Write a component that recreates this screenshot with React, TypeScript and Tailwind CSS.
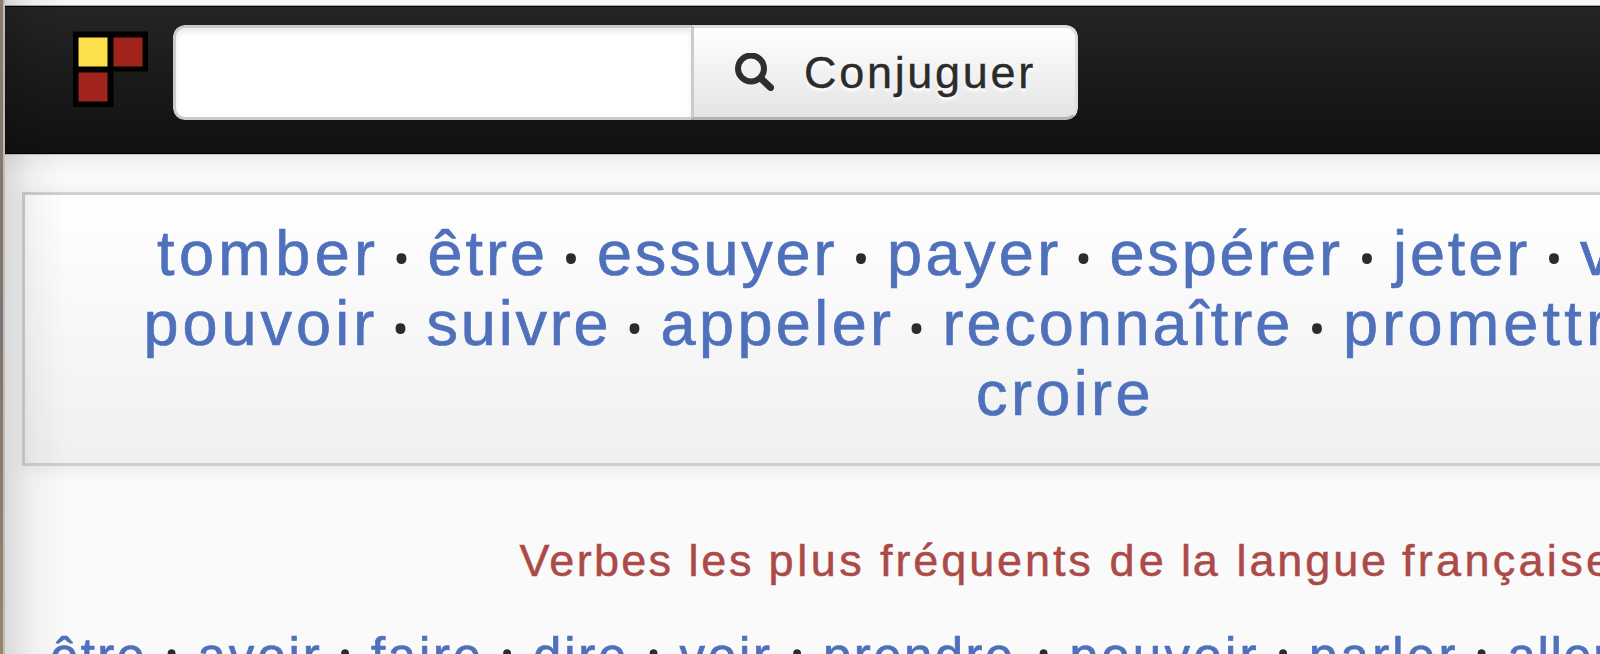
import clsx from "clsx";

type Word = { text: string; className: string };

const recent: Word[][] = [
    [
        { text: "tomber", className: "w-[270.5px] tracking-[4.4px]" },
        { text: "être", className: "w-[169.5px] tracking-[3px]" },
        { text: "essuyer", className: "w-[290px] tracking-[2.8px]" },
        { text: "payer", className: "w-[222.5px] tracking-[3.4px]" },
        { text: "espérer", className: "w-[283.5px] tracking-[2.8px]" },
        { text: "jeter", className: "w-[187px] tracking-[2.9px]" },
        { text: "vendre", className: "w-[260px] tracking-[3px]" },
    ],
    [
        { text: "pouvoir", className: "w-[283px] tracking-[4px]" },
        { text: "suivre", className: "w-[234px] tracking-[2.8px]" },
        { text: "appeler", className: "w-[282px] tracking-[3.4px]" },
        { text: "reconnaître", className: "w-[400.5px] tracking-[2.9px]" },
        { text: "promettre", className: "w-[380px] tracking-[4.2px]" },
    ],
];

const frequent: Word[] = [
    { text: "être", className: "w-[147.5px] tracking-[2.3px]" },
    { text: "avoir", className: "w-[173.5px] tracking-[2.9px]" },
    { text: "faire", className: "w-[162px] tracking-[2.7px]" },
    { text: "dire", className: "w-[146.5px] tracking-[2.8px]" },
    { text: "voir", className: "w-[143.5px] tracking-[2.8px]" },
    { text: "prendre", className: "w-[246.5px] tracking-[2.4px]" },
    { text: "pouvoir", className: "w-[239.5px] tracking-[3.3px]" },
    { text: "parler", className: "w-[198.5px] tracking-[3.2px]" },
    { text: "aller", className: "w-[160px] tracking-[1.6px]" },
];

const title: Word[] = [
    { text: "Verbes", className: "w-[169px] tracking-[2.3px]" },
    { text: "les", className: "w-[80px] tracking-[2.8px]" },
    { text: "plus", className: "w-[111.5px] tracking-[3.6px]" },
    { text: "fréquents", className: "w-[229.5px] tracking-[2.9px]" },
    { text: "de", className: "w-[71.5px] tracking-[4.2px]" },
    { text: "la", className: "w-[55.5px] tracking-[1.8px]" },
    { text: "langue", className: "w-[165.5px] tracking-[2.9px]" },
    { text: "française", className: "w-[230px] tracking-[3.3px]" },
];

function Verb({ word, small }: { word: Word; small?: boolean }) {
    return (
        <span className={clsx("flex shrink-0 justify-between", word.className)}>
            <a className="text-[#4f70bb] [-webkit-text-stroke:0.7px_#4f70bb]">{word.text}</a>
            <span
                className={clsx(
                    "mr-[21px] flex w-[10px] justify-center font-['Noto_Sans'] tracking-normal text-[#2b2b2b]",
                    small ? "mt-[5px] h-[37px] text-[64px] leading-[37px]" : "mt-[18px] h-[40px] text-[80px] leading-[40px]"
                )}
            >
                ·
            </span>
        </span>
    );
}

function Logo() {
    return (
        <svg className="h-[76px] w-[76px] shrink-0" viewBox="0 0 76 76">
            <path d="M0 0.5H75V40.5H40.5V76H0Z" fill="#000" />
            <rect x="5.5" y="6.5" width="29" height="29" fill="#fbe04b" />
            <rect x="40.5" y="6.5" width="29" height="29" fill="#a0241b" />
            <rect x="5.5" y="41.5" width="29" height="29" fill="#a0241b" />
        </svg>
    );
}

function Header() {
    return (
        <header className="flex h-[148px] items-start border-y border-[#000] bg-linear-to-b from-[#242424] to-[#111] pl-[68px]">
            <div className="mt-[24px]">
                <Logo />
            </div>
            <div className="mt-[18px] ml-[24px] flex h-[95px] w-[905px] overflow-hidden rounded-[12px]">
                <input className="w-[518px] rounded-l-[12px] border-[3px] border-r-0 border-[#cbcbcb] bg-white shadow-[inset_0_4px_5px_#ececec] outline-none" />
                <button className="flex flex-1 items-center rounded-r-[12px] border-[3px] border-[#dedede] border-b-[#b4b4b4] border-l-[#cbcbcb] bg-linear-to-b from-white to-[#e4e4e4] pl-[41px]">
                    <svg className="h-[40px] w-[40px] blur-[0.7px]" viewBox="0 0 40 40" fill="none" stroke="#2e2e2e">
                        <circle cx="16" cy="15.5" r="13" strokeWidth="6" />
                        <path d="M26 25.5L35.5 34.5" strokeWidth="7" strokeLinecap="round" />
                    </svg>
                    <span className="ml-[29px] text-[45px] leading-none tracking-[2.7px] text-[#2b2b2b] [-webkit-text-stroke:0.4px_#2b2b2b] [text-shadow:0_3px_3px_#fff]">
                        Conjuguer
                    </span>
                </button>
            </div>
        </header>
    );
}

export default function App() {
    return (
        <div className="flex h-[654px] w-[1600px] overflow-hidden bg-[#fafafa] font-['Liberation_Sans',sans-serif] whitespace-nowrap">
            <div className="w-[3px] shrink-0 bg-linear-to-b from-[#8a7d6d] via-[#7d7470] to-[#9a8369]" />
            <div className="w-[2px] shrink-0 bg-[#bdbcbb]" />
            <main className="relative w-[1595px] overflow-hidden">
                <div className="h-[6px] border-b border-[#a9acac] bg-[#f6f6f6]" />
                <Header />
                <div className="h-[38px] border-t border-[#c4c4c4] bg-linear-to-b from-[#efefef] to-[#fafafa] to-50%" />
                <section className="ml-[17px] h-[274px] w-[2000px] border-[3px] border-[#d0d0d0] bg-linear-to-b from-white to-[#f0f0f0] pt-[23px] text-[63px] leading-[70px] shadow-[0_3px_14px_#e8e8e8]">
                    <div className="flex h-[70px] pl-[132px]">
                        {recent[0].map((w) => <Verb key={w.text} word={w} />)}
                    </div>
                    <div className="flex h-[70px] pl-[118.5px]">
                        {recent[1].map((w) => <Verb key={w.text} word={w} />)}
                    </div>
                    <a className="ml-[951px] tracking-[3.4px] text-[#4f70bb] [-webkit-text-stroke:0.7px_#4f70bb]">croire</a>
                </section>
                <h2 className="mt-[70px] flex h-[50px] pl-[514.5px] text-[45px] leading-[50px] text-[#ab4a46] [-webkit-text-stroke:0.5px_#ab4a46]">
                    {title.map((w) => (
                        <span key={w.text} className={clsx("shrink-0", w.className)}>{w.text}</span>
                    ))}
                </h2>
                <div className="mt-[42px] flex h-[57px] pl-[45px] text-[51px] leading-[57px]">
                    {frequent.map((w) => <Verb key={w.text} word={w} small />)}
                </div>
                {/* page edge shade */}
                <div className="pointer-events-none absolute inset-y-0 left-0 w-[62px] bg-linear-to-r from-black/13 via-black/4 via-45% to-transparent" />
            </main>
        </div>
    );
}
